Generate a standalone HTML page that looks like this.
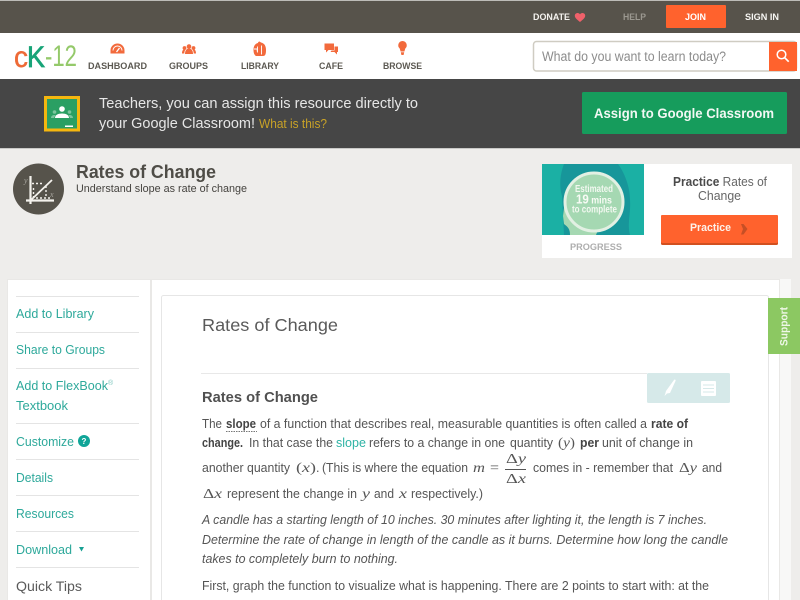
<!DOCTYPE html>
<html lang="en">
<head>
<meta charset="utf-8">
<title>Rates of Change</title>
<style>
html,body{margin:0;padding:0;width:800px;height:600px;overflow:hidden;background:#eeedeb}
svg{display:block;filter:blur(.3px)}
text{font-family:"Liberation Sans",sans-serif;white-space:pre}
.b{font-weight:700}
.n{font-size:9.5px;font-weight:700;fill:#5c5952}
.s{font-size:12.5px;fill:#2ea99b}
.p{font-size:12.5px;fill:#555}
.pb{font-size:12.5px;fill:#444;font-weight:700}
.i{font-size:12.5px;fill:#555;font-style:italic}
.m{font-family:"Liberation Serif",serif;font-size:14px;fill:#555}
.mi{font-family:"Liberation Serif",serif;font-size:14px;fill:#555;font-style:italic}
</style>
</head>
<body>
<svg width="800" height="600" viewBox="0 0 800 600" xmlns="http://www.w3.org/2000/svg">
<rect width="800" height="600" fill="#eeedeb"/>

<!-- top bar -->
<rect y="0" width="800" height="33" fill="#57534b"/>
<rect y="0" width="800" height="1" fill="#bdbcb8"/>
<text x="533" y="20" font-size="9.5" class="b" fill="#f4f2ee" textLength="37" lengthAdjust="spacingAndGlyphs">DONATE</text>
<path d="M580 22c-3-2.400-5.200-4.200-5.200-6.200 0-1.700 1.300-2.800 2.800-2.800 1 0 1.900.5 2.400 1.400.5-.9 1.400-1.400 2.400-1.400 1.600 0 2.800 1.100 2.800 2.800 0 2-2.200 3.800-5.200 6.200z" fill="#f0616a"/>
<text x="623" y="20" font-size="9.5" class="b" fill="#9b9890" textLength="23" lengthAdjust="spacingAndGlyphs">HELP</text>
<rect x="666" y="5" width="60" height="23" rx="1" fill="#ff622d"/>
<text x="685" y="20" font-size="9.5" class="b" fill="#fff" textLength="21" lengthAdjust="spacingAndGlyphs">JOIN</text>
<text x="745" y="20" font-size="9.5" class="b" fill="#f7f6f3" textLength="34" lengthAdjust="spacingAndGlyphs">SIGN IN</text>

<!-- nav -->
<rect y="33" width="800" height="46" fill="#fff"/>
<text x="14" y="67" font-size="30" fill="#ee6a36" stroke="#ee6a36" stroke-width=".4" textLength="14" lengthAdjust="spacingAndGlyphs">c</text>
<text x="27" y="67" font-size="30" fill="#18a478" stroke="#18a478" stroke-width=".7" textLength="18" lengthAdjust="spacingAndGlyphs">K</text>
<text x="45" y="66" font-size="30" fill="#94c96a" textLength="32" lengthAdjust="spacingAndGlyphs">-12</text>

<path d="M110.500 53.500v-3a7 7 0 0 1 14 0v3z" fill="#f26a3c"/>
<path d="M113 50.500a4.500 4.500 0 0 1 9 0" fill="none" stroke="#fff" stroke-width="1"/>
<path d="M116.500 52l3-4" stroke="#fff" stroke-width="1.300"/>
<text x="88" y="69" class="n" textLength="59" lengthAdjust="spacingAndGlyphs">DASHBOARD</text>

<g fill="#f26a3c">
<circle cx="189" cy="46.500" r="2.300"/><circle cx="184.500" cy="48" r="1.900"/><circle cx="193.500" cy="48" r="1.900"/>
<path d="M185 54c0-3.500 1.500-5.500 4-5.500s4 2 4 5.500z"/>
<path d="M182 53.500c0-2.500.8-4 2.500-4.200l1 .3c-.8 1-1.200 2.300-1.200 3.900z"/>
<path d="M196 53.500c0-2.500-.8-4-2.500-4.200l-1 .3c.8 1 1.200 2.300 1.200 3.900z"/>
</g>
<text x="169" y="69" class="n" textLength="39" lengthAdjust="spacingAndGlyphs">GROUPS</text>

<path d="M259.500 41.500c-.8 0-1.500.7-1.500 1.500-2.700.6-4.500 3-4.500 6.500 0 3.500.8 5.500 2.500 6.500h7c2.500 0 3-2.300 3-6 0-4-1.500-6.700-5-7.500z" fill="#f26a3c"/>
<path d="M254 49h3.200v2.500M257.500 46.500v6M261.500 45.500v9" stroke="#fff" stroke-width=".9" fill="none"/>
<text x="241" y="69" class="n" textLength="38" lengthAdjust="spacingAndGlyphs">LIBRARY</text>

<path d="M324.500 43.500h9.500v6.500h-5.500l-2.500 2.500v-2.500h-1.500z" fill="#f26a3c"/>
<path d="M334.500 46.500h3.500v5.500h-1v2.500l-2.500-2.500h-4l1-1.500h3z" fill="#f26a3c"/>
<text x="319" y="69" class="n" textLength="24" lengthAdjust="spacingAndGlyphs">CAFE</text>

<path d="M402.500 41a4.300 4.300 0 0 1 2.800 7.500l-.9 3h-3.800l-.9-3a4.300 4.300 0 0 1 2.800-7.500z" fill="#f26a3c"/>
<path d="M400.800 52.300h3.400l-.6 2.700h-2.200z" fill="#f26a3c"/>
<text x="383" y="69" class="n" textLength="39" lengthAdjust="spacingAndGlyphs">BROWSE</text>

<rect x="533.500" y="41.500" width="263" height="29.500" rx="3" fill="#fff" stroke="#cfccc2" stroke-width="1.500"/>
<rect x="769" y="42" width="28" height="29" fill="#ff622d"/>
<text x="542" y="61" font-size="13.500" fill="#8c8c8c" textLength="184" lengthAdjust="spacingAndGlyphs">What do you want to learn today?</text>
<circle cx="781.500" cy="54.500" r="4.300" fill="none" stroke="#fff" stroke-width="1.500"/>
<path d="M784.700 57.700l4 4" stroke="#fff" stroke-width="1.700"/>

<!-- banner -->
<rect y="79" width="800" height="69" fill="#464646"/>
<rect y="148" width="800" height="1" fill="#c9c9c7"/>
<rect x="44" y="96" width="36" height="35.500" fill="#f5b70f"/>
<rect x="47" y="99" width="30" height="29.500" fill="#2a9f63"/>
<circle cx="62" cy="109" r="2.800" fill="#fff"/>
<path d="M55 118c0-3 3-4.500 7-4.500s7 1.500 7 4.500z" fill="#fff"/>
<circle cx="54.500" cy="112" r="1.800" fill="#7cc59d"/><circle cx="69.500" cy="112" r="1.800" fill="#7cc59d"/>
<path d="M51 118c0-2 1.500-3 3.500-3l1 .3-1.500 2.700zM73 118c0-2-1.500-3-3.500-3l-1 .3 1.500 2.700z" fill="#7cc59d"/>
<rect x="65" y="125.500" width="8" height="1.500" fill="#fff"/>
<text x="99" y="108" font-size="14.500" fill="#e6e6e6" textLength="319" lengthAdjust="spacingAndGlyphs">Teachers, you can assign this resource directly to</text>
<text x="99" y="128" font-size="14.500" fill="#e6e6e6" textLength="156" lengthAdjust="spacingAndGlyphs">your Google Classroom!</text>
<text x="259" y="128" font-size="12.500" fill="#c9a227" textLength="68" lengthAdjust="spacingAndGlyphs">What is this?</text>
<rect x="582" y="92" width="205" height="42" rx="1.500" fill="#169c5c"/>
<text x="594" y="118" font-size="13.500" class="b" fill="#f2f8f4" textLength="180" lengthAdjust="spacingAndGlyphs">Assign to Google Classroom</text>

<!-- header -->
<circle cx="38.500" cy="189" r="25.500" fill="#56534b"/>
<g stroke="#f4f2ed" fill="none">
<path d="M30.500 176v28M26 200.500h28" stroke-width="2.200"/>
<path d="M31 200l21-20" stroke-width="1.800"/>
<path d="M32 183.500h12M46 186v12M33.500 188v10M36 198h16" stroke-width="1.400" stroke-dasharray="2 2"/>
</g>
<text x="24" y="183" font-size="8" font-style="italic" fill="#a8a69f" style="font-family:'Liberation Serif',serif">y</text>
<text x="50" y="197" font-size="8" font-style="italic" fill="#a8a69f" style="font-family:'Liberation Serif',serif">x</text>
<text x="76" y="178" font-size="18" class="b" fill="#4f4d47" textLength="140" lengthAdjust="spacingAndGlyphs">Rates of Change</text>
<text x="76" y="192" font-size="11" fill="#45433f" textLength="171" lengthAdjust="spacingAndGlyphs">Understand slope as rate of change</text>

<!-- practice card -->
<rect x="542" y="164" width="250" height="94" fill="#fff"/>
<clipPath id="c1"><rect x="542" y="164" width="102" height="71"/></clipPath>
<g clip-path="url(#c1)">
<rect x="542" y="164" width="102" height="71" fill="#1bb0a4"/>
<path d="M564 164c-4 10-5 22-2 32l2 39h66c-3-12 1-22 0-35 0-14-6-28-12-36z" fill="#17969a"/>
<path d="M564 208l10 2v25h-4c0-6-2-8-6-11l-1-8z" fill="#a5d8b2"/>
<path d="M574 225h26l-4 10h-24z" fill="#a5d8b2"/>
<circle cx="594" cy="202" r="29" fill="#a5d8b2" stroke="#e2f0e3" stroke-width="3"/>
</g>
<text x="575" y="192" font-size="10" class="b" fill="#f2f8f0" textLength="38" lengthAdjust="spacingAndGlyphs">Estimated</text>
<text x="576" y="203.500" font-size="13" class="b" fill="#f8fbf5" textLength="36" lengthAdjust="spacingAndGlyphs"><tspan>19</tspan><tspan font-size="10"> mins</tspan></text>
<text x="572" y="212.500" font-size="10" class="b" fill="#f2f8f0" textLength="45" lengthAdjust="spacingAndGlyphs">to complete</text>
<text x="570" y="250" font-size="9.500" class="b" fill="#aeaeae" textLength="52" lengthAdjust="spacingAndGlyphs">PROGRESS</text>
<text x="673" y="186" font-size="12.500" fill="#666" textLength="94" lengthAdjust="spacingAndGlyphs"><tspan font-weight="700" fill="#4a4a4a">Practice</tspan> Rates of</text>
<text x="698" y="200" font-size="12.500" fill="#666" textLength="43" lengthAdjust="spacingAndGlyphs">Change</text>
<rect x="661" y="215" width="117" height="30" rx="1.500" fill="#d2501f"/>
<rect x="661" y="215" width="117" height="28" rx="1.500" fill="#ff622d"/>
<text x="690" y="231" font-size="11" class="b" fill="#fdf1ea" textLength="41" lengthAdjust="spacingAndGlyphs">Practice</text>
<path d="M741 224l2.500 0 4 5-4 5.500-2.500 0 2-5.500z" fill="#c64f25"/>

<!-- main -->
<rect x="7" y="279" width="144" height="321" fill="#e9e8e6"/>
<rect x="8" y="280" width="142" height="320" fill="#fff"/>
<rect x="151" y="279" width="629" height="321" fill="#e9e8e6"/>
<rect x="152" y="280" width="627" height="320" fill="#fff"/>
<rect x="780" y="279" width="11" height="321" fill="#f8f8f7"/>
<rect x="161.500" y="295.500" width="607" height="310" rx="2" fill="#fff" stroke="#e6e6e6"/>

<!-- sidebar -->
<g fill="#e4e4e4">
<rect x="16" y="296" width="123" height="1"/><rect x="16" y="332" width="123" height="1"/><rect x="16" y="368" width="123" height="1"/><rect x="16" y="423" width="123" height="1"/><rect x="16" y="459" width="123" height="1"/><rect x="16" y="495" width="123" height="1"/><rect x="16" y="531" width="123" height="1"/><rect x="16" y="567" width="123" height="1"/>
</g>
<text x="16" y="318" class="s" textLength="78" lengthAdjust="spacingAndGlyphs">Add to Library</text>
<text x="16" y="354" class="s" textLength="89" lengthAdjust="spacingAndGlyphs">Share to Groups</text>
<text x="16" y="390" class="s" textLength="92" lengthAdjust="spacingAndGlyphs">Add to FlexBook</text>
<text x="108" y="385" font-size="7" fill="#7cc6bd">®</text>
<text x="16" y="410" class="s" textLength="52" lengthAdjust="spacingAndGlyphs">Textbook</text>
<text x="16" y="446" class="s" textLength="58" lengthAdjust="spacingAndGlyphs">Customize</text>
<circle cx="84" cy="441" r="6" fill="#10a598"/>
<text x="81.500" y="444" font-size="8" class="b" fill="#fff">?</text>
<text x="16" y="482" class="s" textLength="37" lengthAdjust="spacingAndGlyphs">Details</text>
<text x="16" y="518" class="s" textLength="58" lengthAdjust="spacingAndGlyphs">Resources</text>
<text x="16" y="554" class="s" textLength="56" lengthAdjust="spacingAndGlyphs">Download</text>
<path d="M79 547h5l-2.500 4.500z" fill="#17a093"/>
<text x="16" y="591" font-size="14" fill="#5a5a5a" textLength="66" lengthAdjust="spacingAndGlyphs">Quick Tips</text>

<!-- content -->
<text x="202" y="331" font-size="17.500" fill="#5a5a5a" textLength="136" lengthAdjust="spacingAndGlyphs">Rates of Change</text>
<rect x="201" y="373" width="446" height="1" fill="#e8e8e8"/>
<text x="202" y="402" font-size="14.500" class="b" fill="#505050" textLength="116" lengthAdjust="spacingAndGlyphs">Rates of Change</text>
<rect x="647" y="373" width="83" height="30" rx="1.500" fill="#d6e9e9"/>
<path d="M666 391l8-11c.8-1 2-.2 1.500 1l-5.500 12-3 .5-2.500 2.500 1-3z" fill="#fff"/>
<rect x="701" y="381" width="15" height="15" rx="1" fill="#fff"/>
<path d="M703 385h11M703 388.500h11M703 392h11" stroke="#d6e9e9" stroke-width="1"/>

<text x="202" y="428" class="p" textLength="20" lengthAdjust="spacingAndGlyphs">The</text>
<text x="226" y="428" class="pb" textLength="30" lengthAdjust="spacingAndGlyphs">slope</text>
<path d="M226 431.500h31" stroke="#777" stroke-width="1" stroke-dasharray="1.500 1"/>
<text x="260" y="428" class="p" textLength="387" lengthAdjust="spacingAndGlyphs">of a function that describes real, measurable quantities is often called a</text>
<text x="651" y="428" class="pb" textLength="37" lengthAdjust="spacingAndGlyphs">rate of</text>

<text x="202" y="447" class="pb" textLength="41" lengthAdjust="spacingAndGlyphs">change.</text>
<text x="249" y="447" class="p" textLength="84" lengthAdjust="spacingAndGlyphs">In that case the</text>
<text x="336" y="447" class="p" style="fill:#2eb3a5" textLength="30" lengthAdjust="spacingAndGlyphs">slope</text>
<text x="369" y="447" class="p" textLength="136" lengthAdjust="spacingAndGlyphs">refers to a change in one</text>
<text x="510" y="447" class="p" textLength="43" lengthAdjust="spacingAndGlyphs">quantity</text>
<text x="558" y="447" class="m" textLength="17" lengthAdjust="spacingAndGlyphs">(<tspan font-style="italic">y</tspan>)</text>
<text x="580" y="447" class="pb" textLength="19" lengthAdjust="spacingAndGlyphs">per</text>
<text x="602" y="447" class="p" textLength="91" lengthAdjust="spacingAndGlyphs">unit of change in</text>

<text x="202" y="472" class="p" textLength="88" lengthAdjust="spacingAndGlyphs">another quantity</text>
<text x="296" y="472" class="m" textLength="20" lengthAdjust="spacingAndGlyphs">(<tspan font-style="italic">x</tspan>)</text>
<text x="316" y="472" class="p">.</text>
<text x="322" y="472" class="p" textLength="146" lengthAdjust="spacingAndGlyphs">(This is where the equation</text>
<text x="473" y="472" class="mi" textLength="12" lengthAdjust="spacingAndGlyphs">m</text>
<text x="490" y="472" class="m" textLength="9" lengthAdjust="spacingAndGlyphs">=</text>
<text x="506" y="463" class="m" textLength="20" lengthAdjust="spacingAndGlyphs">Δ<tspan font-style="italic">y</tspan></text>
<rect x="505" y="469" width="21" height="1" fill="#555"/>
<text x="506" y="483" class="m" textLength="20" lengthAdjust="spacingAndGlyphs">Δ<tspan font-style="italic">x</tspan></text>
<text x="533" y="472" class="p" textLength="140" lengthAdjust="spacingAndGlyphs">comes in - remember that</text>
<text x="679" y="472" class="m" textLength="18" lengthAdjust="spacingAndGlyphs">Δ<tspan font-style="italic">y</tspan></text>
<text x="702" y="472" class="p" textLength="20" lengthAdjust="spacingAndGlyphs">and</text>

<text x="203" y="498" class="m" textLength="19" lengthAdjust="spacingAndGlyphs">Δ<tspan font-style="italic">x</tspan></text>
<text x="227" y="498" class="p" textLength="130" lengthAdjust="spacingAndGlyphs">represent the change in</text>
<text x="362" y="498" class="mi" textLength="8" lengthAdjust="spacingAndGlyphs">y</text>
<text x="374" y="498" class="p" textLength="20" lengthAdjust="spacingAndGlyphs">and</text>
<text x="399" y="498" class="mi" textLength="8" lengthAdjust="spacingAndGlyphs">x</text>
<text x="411" y="498" class="p" textLength="72" lengthAdjust="spacingAndGlyphs">respectively.)</text>

<text x="202" y="524" class="i" textLength="505" lengthAdjust="spacingAndGlyphs">A candle has a starting length of 10 inches. 30 minutes after lighting it, the length is 7 inches.</text>
<text x="202" y="544" class="i" textLength="526" lengthAdjust="spacingAndGlyphs">Determine the rate of change in length of the candle as it burns. Determine how long the candle</text>
<text x="202" y="563" class="i" textLength="196" lengthAdjust="spacingAndGlyphs">takes to completely burn to nothing.</text>
<text x="202" y="590" class="p" textLength="507" lengthAdjust="spacingAndGlyphs">First, graph the function to visualize what is happening. There are 2 points to start with: at the</text>

<!-- support -->
<rect x="768" y="298" width="32" height="56" fill="#8cc862"/>
<text transform="translate(787.500 346) rotate(-90)" font-size="11" class="b" fill="#eef7e6" textLength="39" lengthAdjust="spacingAndGlyphs">Support</text>
</svg>
</body>
</html>
